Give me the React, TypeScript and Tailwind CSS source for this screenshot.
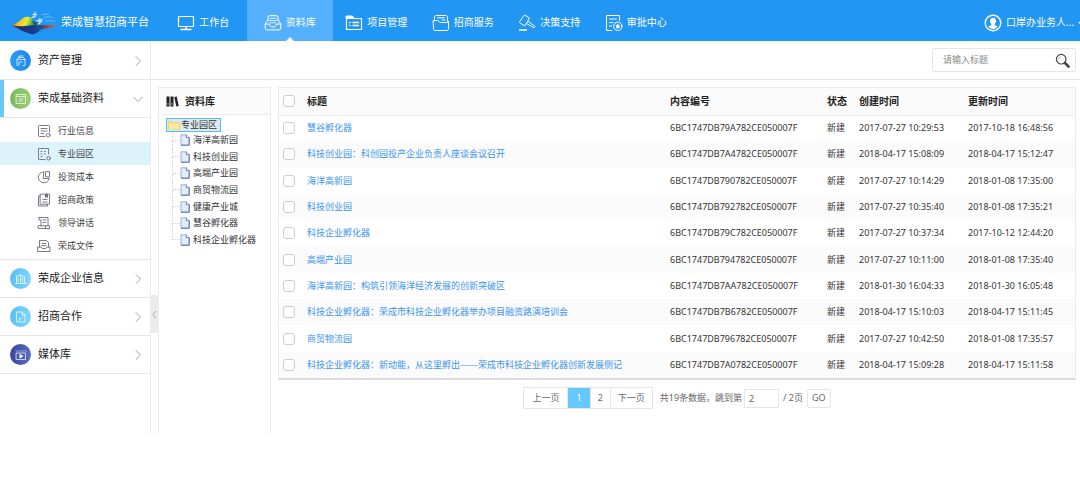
import { useState } from "react";
import type { ReactNode } from "react";

const svgBase = {
  fill: "none",
  stroke: "currentColor",
  strokeLinecap: "round" as const,
  strokeLinejoin: "round" as const,
  "aria-hidden": true,
};

function NavIcon({ children }: { children: ReactNode }) {
  return (
    <svg {...svgBase} viewBox="0 0 18 18" strokeWidth="1" className="h-[18px] w-[18px] shrink-0">
      {children}
    </svg>
  );
}

const navItems: { label: string; icon: ReactNode }[] = [
  {
    label: "工作台",
    icon: (
      <NavIcon>
        <path d="M1.500 2.500h15v10h-15z" strokeWidth="1.200" />
        <path d="M9 12.500v3M4 15.500h10" strokeWidth="1.400" />
      </NavIcon>
    ),
  },
  {
    label: "资料库",
    icon: (
      <NavIcon>
        <path d="M4 6.500V3c0-.8.500-1.300 1.300-1.300h7.400c.8 0 1.300.5 1.300 1.300v3.500" />
        <path d="M6 4.300h6M5.500 6.500h7M6 8.700h6" strokeWidth=".8" />
        <path d="M4 5.500 1.200 10v4.400c0 .9.600 1.500 1.500 1.500h12.600c.9 0 1.500-.6 1.500-1.500V10L14 5.500" />
        <path d="M1.200 10h4.300c0 1.700 1.400 3 3.500 3s3.500-1.300 3.500-3h4.300" />
      </NavIcon>
    ),
  },
  {
    label: "项目管理",
    icon: (
      <NavIcon>
        <path d="M1.500 15.500v-13h6l1.300 2h7.700v11z" strokeWidth="1.200" />
        <path d="M1.500 2h6l1.300 2.500H1.500z" fill="currentColor" />
        <path d="M4.800 8.500h.4M4.800 11.500h.4M8 8.500h5.500M8 11.500h5.500" strokeWidth="1.400" />
      </NavIcon>
    ),
  },
  {
    label: "招商服务",
    icon: (
      <NavIcon>
        <path d="M2.500 7V3.200c0-1 .7-1.700 1.700-1.700h9.600c1 0 1.700.7 1.700 1.700V7" />
        <path d="M5.500 3.800h7M10 6h3" />
        <path d="M1.500 6.500h4.200c1.300 0 1.200 2 2.500 2h5.800c1.500 0 2.500-.5 2.500-1.500v7.800c0 1-.7 1.700-1.700 1.700H3.200c-1 0-1.700-.7-1.700-1.700z" />
      </NavIcon>
    ),
  },
  {
    label: "决策支持",
    icon: (
      <NavIcon>
        <path d="M7.500 1.500 11.500 4 7 11.800l-4.700-2.500c-.8-.5-.9-1.100-.4-1.900l3.500-5.200c.5-.8 1.300-1.100 2.100-.7z" />
        <path d="m10 7.300 6.500 4.600c.8.600.3 2-.8 1.600L8.800 9.700" />
        <path d="M1.500 16h7" strokeWidth="1.400" />
      </NavIcon>
    ),
  },
  {
    label: "审批中心",
    icon: (
      <NavIcon>
        <path d="M7 16.500H1.500v-15h13v5" />
        <path d="M4.500 5h7M4.500 8.500h3.500M4.500 12h2" />
        <circle cx="12.800" cy="12.300" r="4.200" />
        <path d="m12.800 10.300.6 1.300 1.400.2-1 1 .2 1.400-1.200-.7-1.200.7.2-1.400-1-1 1.400-.2z" strokeWidth=".8" fill="currentColor" />
      </NavIcon>
    ),
  },
];

function Logo() {
  return (
    <svg viewBox="0 0 48 26" className="h-[26px] w-[48px] shrink-0" aria-hidden="true">
      <defs>
        <linearGradient id="logo-sun" x1="0" y1=".4" x2="1" y2=".6">
          <stop offset="0" stopColor="#d8401f" />
          <stop offset=".25" stopColor="#efb81c" />
          <stop offset=".55" stopColor="#e9ec38" />
          <stop offset=".8" stopColor="#4fae4c" />
          <stop offset="1" stopColor="#1c6c6c" />
        </linearGradient>
        <linearGradient id="logo-sea" x1="0" y1="0" x2="1" y2="0">
          <stop offset="0" stopColor="#8a3248" />
          <stop offset=".3" stopColor="#1d3273" />
          <stop offset=".75" stopColor="#153f93" />
          <stop offset="1" stopColor="#1d62bf" />
        </linearGradient>
        <linearGradient id="logo-hill" x1="0" y1="0" x2="1" y2="0">
          <stop offset="0" stopColor="#176a70" />
          <stop offset=".4" stopColor="#2c4a6e" />
          <stop offset=".65" stopColor="#c23d2e" />
          <stop offset="1" stopColor="#ee6a36" />
        </linearGradient>
      </defs>
      <path d="M0 15.500Q6 13 11 8q4-2.500 8-.3 3 4 6.500 8.300-12 2.500-25.500-.5z" fill="url(#logo-sun)" />
      <path d="M0 15.500q12 1.500 22-.5 5-1.500 9 2.500-3 4.500-10 7Q12 22.500 0 15.500z" fill="url(#logo-sea)" />
      <path d="M19 10.500q6 1 9.500 4.500 8 .5 16.500 0-6 3-15 4.300-6-1.800-11-8.800z" fill="url(#logo-hill)" />
      <path d="M20.500 4.500h4.500M23 1.800v5.500M19.500 7.500l4-1M27.500 8.500v6M24.500 11l6-1.500M25.500 14.500l4.500-3.500" stroke="#c4e4fd" strokeWidth="1.300" fill="none" />
      <path d="M29.500 4.800q4-1.600 7.500 0M31 7.500q5-1.400 10 0M33 11q5-1 10 .6" stroke="#7cc3fb" strokeWidth=".8" fill="none" />
    </svg>
  );
}

function Header() {
  return (
    <header className="flex h-[41px] items-stretch overflow-hidden bg-[#2196f3] text-white">
      <a href="#home" className="flex w-[160px] shrink-0 items-center gap-px pt-1 pl-3 text-[11px] whitespace-nowrap">
        <Logo />
        <span>荣成智慧招商平台</span>
      </a>
      <nav className="flex w-[519px] shrink-0">
        {navItems.map((item) => {
          const active = item.label === "资料库";
          return (
            <a
              key={item.label}
              href={`#${item.label}`}
              aria-current={active ? "page" : undefined}
              className={`relative flex flex-1 items-center justify-center gap-1 pt-1 text-[10px] whitespace-nowrap ${active ? "bg-[#54b0fd]" : ""}`}
            >
              {item.icon}
              <span>{item.label}</span>
              {active && (
                <span className="absolute bottom-0 left-1/2 h-0 w-0 -translate-x-1/2 border-x-4 border-b-4 border-x-transparent border-b-white" />
              )}
            </a>
          );
        })}
      </nav>
      <button type="button" className="ml-auto flex shrink-0 items-center gap-1 pt-1 text-[10px] whitespace-nowrap">
        <svg viewBox="0 0 18 18" className="h-[18px] w-[18px]" aria-hidden="true">
          <circle cx="9" cy="9" r="7.800" fill="none" stroke="#fff" strokeWidth="1.400" />
          <path d="M9 3.800c2 0 3 1.400 3 3.200 0 1.300-.5 2.300-1.300 2.900v1l2.900 1.300c-1 1.800-2.700 2.700-4.600 2.700s-3.600-.9-4.600-2.700l2.900-1.300v-1C6.500 9.300 6 8.300 6 7c0-1.800 1-3.200 3-3.200z" fill="#fff" />
        </svg>
        <span>口岸办业务人...</span>
        <span className="h-0 w-[2px] border-t-2 border-l-2 border-l-transparent border-t-white" />
      </button>
    </header>
  );
}

type Badge = { fill: string; glyph: ReactNode };

function Round({ badge }: { badge: Badge }) {
  return (
    <span className={`flex h-[21px] w-[21px] shrink-0 items-center justify-center rounded-full text-white/90 ${badge.fill}`}>
      <svg {...svgBase} viewBox="0 0 12 12" strokeWidth=".8" className="h-3 w-3">
        {badge.glyph}
      </svg>
    </span>
  );
}

function Chevron({ open = false }: { open?: boolean }) {
  return (
    <svg {...svgBase} viewBox="0 0 10 10" className="ml-auto h-[10px] w-[10px] text-[#a3a3a3]">
      <path d={open ? "M.5 3 5 7.500 9.500 3" : "M3 .5 7.500 5 3 9.500"} />
    </svg>
  );
}

const groups: { label: string; badge: Badge }[] = [
  {
    label: "资产管理",
    badge: {
      fill: "bg-linear-to-r from-[#2a9df6] to-[#1f86ea]",
      glyph: <path d="M2 10.500V4.500h8v6h-2M2 4.500l1.500-2h5l1.500 2M4 10.500v-3.500h3M4 2.500V1h4" />,
    },
  },
  {
    label: "荣成基础资料",
    badge: {
      fill: "bg-linear-to-r from-[#77b95f] to-[#9bcf72]",
      glyph: <path d="M1.500 1.500h9v9h-9zM1.500 3.500h9M4 6h4M4 8h3" />,
    },
  },
  {
    label: "荣成企业信息",
    badge: {
      fill: "bg-linear-to-r from-[#57bdf5] to-[#7ed6fb]",
      glyph: <path d="M.5 10.500h11M1.500 10.500V3l4-1.500v9M5.500 2.500l4 1v7M3 4.500v4M7.500 5v4" />,
    },
  },
  {
    label: "招商合作",
    badge: {
      fill: "bg-linear-to-r from-[#57bdf5] to-[#7ed6fb]",
      glyph: <path d="M2 1h5l3 3v7H2zM7 1v3h3M4.500 9V6.500M4.500 9l3-2.500" />,
    },
  },
  {
    label: "媒体库",
    badge: {
      fill: "bg-linear-to-r from-[#35479f] to-[#5c6cc4]",
      glyph: (
        <>
          <path d="M1.500 4h9v6.500h-9zM1 1.500l1 1M4 1.500l1 1M7 1.500l1 1M10 1.500l1 1" />
          <path d="m5 5.500 3 1.700-3 1.700z" fill="currentColor" />
        </>
      ),
    },
  },
];

const subItems: { label: string; glyph: ReactNode }[] = [
  {
    label: "行业信息",
    glyph: (
      <>
        <path d="M8 12.500H2.500a1 1 0 0 1-1-1v-9a1 1 0 0 1 1-1h9a1 1 0 0 1 1 1V8M4 4.500h6M4 7h6M4 9.500h3" />
        <circle cx="11.200" cy="11.200" r="1.800" />
      </>
    ),
  },
  {
    label: "专业园区",
    glyph: (
      <>
        <path d="M8 12.500H1.500v-11h10v6" strokeDasharray="2 .8" />
        <path d="M4 4.500h1M7.500 4.500h1M4 7h1M7.500 7h1M4 9.500h1" />
        <circle cx="11.500" cy="11.200" r="1.800" />
      </>
    ),
  },
  {
    label: "投资成本",
    glyph: (
      <>
        <path d="M6.500 1.800a5.500 5.500 0 1 0 5.700 6.700H6.500z" />
        <path d="M8.500 6.500v-5h4v5z" />
      </>
    ),
  },
  {
    label: "招商政策",
    glyph: (
      <>
        <path d="M3.500 1.200h9v10h-9zM3.500 3H1.500v10h9v-1.800M6 9h4M6 6.500h4" />
        <path d="M8.500 1.500v3l1-1 1 1v-3z" fill="currentColor" />
      </>
    ),
  },
  {
    label: "领导讲话",
    glyph: (
      <path d="M2 1.500h9v8M2 1.500v2.500h2v5.800M1.500 9.800h7v2.700h-7zM8.500 12.500h4V9.800h-4M6 4h3M6 6.500h3" />
    ),
  },
  {
    label: "荣成文件",
    glyph: (
      <path d="M2.500 8V1.500h7l2 2V8M5 4.500h4M5 6.500h4M1 8h3l1.200 1.500h3.600L10 8h3v4.500H1z" />
    ),
  },
];

function Sidebar() {
  return (
    <aside className="w-[151px] shrink-0 border-r border-[#ececec] pt-px">
      {groups.map((g) => {
        const open = g.label === "荣成基础资料";
        return (
          <section key={g.label} className="border-b border-[#e6e6e6]">
            <button
              type="button"
              aria-expanded={open}
              className={`flex h-[37px] w-full items-center border-l-4 pr-[7px] pl-[6px] text-[11px] text-[#222] ${open ? "border-[#66c8fd]" : "border-transparent"}`}
            >
              <Round badge={g.badge} />
              <span className="ml-[7px]">{g.label}</span>
              <Chevron open={open} />
            </button>
            {open && (
              <ul className="border-t border-[#e6e6e6] pt-px pb-[2px]">
                {subItems.map((s) => (
                  <li key={s.label}>
                    <a
                      href={`#${s.label}`}
                      className={`flex h-[23px] items-center gap-[7px] pl-[37px] text-[9px] text-[#444] ${s.label === "专业园区" ? "bg-[#dcf3fc]" : ""}`}
                    >
                      <svg {...svgBase} viewBox="0 0 14 14" strokeWidth=".9" className="h-[14px] w-[14px] text-[#6b6b78]">
                        {s.glyph}
                      </svg>
                      {s.label}
                    </a>
                  </li>
                ))}
              </ul>
            )}
          </section>
        );
      })}
    </aside>
  );
}

const treeNodes = ["海洋高新园", "科技创业园", "高端产业园", "商贸物流园", "健康产业城", "慧谷孵化器", "科技企业孵化器"];

function TreePanel() {
  return (
    <section className="w-[113px] shrink-0 border border-b-0 border-[#ececec]">
      <h2 className="flex h-[27px] items-center gap-[6px] border-b border-[#ececec] bg-[#fbfbfb] pl-[7px] text-[10px] font-bold text-[#222]">
        <svg viewBox="0 0 13 11" className="h-[11px] w-[13px]" aria-hidden="true">
          <path d="M.5.500h3v10h-3zM4.500.500h3v10h-3z" fill="#222" />
          <path d="m8.300 1 2.400-.6 2 9.500-2.400.6z" fill="#222" />
          <path d="M1.300 8h1.400M5.300 8h1.400" stroke="#fff" strokeWidth=".8" />
        </svg>
        资料库
      </h2>
      <div className="pt-[3px] pl-[7px] text-[9px] leading-3 whitespace-nowrap text-[#333]">
        <a href="#专业园区" className="flex h-[14px] w-[55px] items-center border border-[#58bfe3] bg-[#dde9ee] pl-px">
          <svg viewBox="0 0 12 10" className="mr-px h-[10px] w-3" aria-hidden="true">
            <path d="M.5 9.300V1.300h3.700l1 1.300h6.300v6.700z" fill="#f9e27e" stroke="#e3c862" strokeWidth=".6" />
            <path d="M1 3.800h10v5H1z" fill="#fdeb9c" />
          </svg>
          专业园区
        </a>
        <ul className="ml-[6px] grid min-h-[116px]">
          {treeNodes.map((n, i) => (
            <li key={n} className="flex items-stretch">
              <span className="flex w-2 flex-col">
                <span className="flex-1 border-b border-l border-dotted border-[#d4d4d4]" />
                <span className={`flex-1 border-l border-dotted ${i === treeNodes.length - 1 ? "border-transparent" : "border-[#d4d4d4]"}`} />
              </span>
              <a href={`#${n}`} className="flex items-center gap-[3px]">
                <svg viewBox="0 0 10 12" className="h-3 w-[10px]" aria-hidden="true">
                  <path d="M1 .8h5.300L9.200 3.600v7.600H1z" fill="#e3ecfb" stroke="#86a0d0" strokeWidth=".8" />
                  <path d="M9.200 3.600v7.600H1" fill="none" stroke="#4f6aa8" strokeWidth=".9" />
                  <path d="M6.300.8v2.800h2.900" fill="#fff" stroke="#4f6aa8" strokeWidth=".8" />
                </svg>
                {n}
              </a>
            </li>
          ))}
        </ul>
      </div>
    </section>
  );
}

const rows = [
  ["慧谷孵化器", "6BC1747DB79A782CE050007F", "2017-07-27 10:29:53", "2017-10-18 16:48:56"],
  ["科技创业园：科创园投产企业负责人座谈会议召开", "6BC1747DB7A4782CE050007F", "2018-04-17 15:08:09", "2018-04-17 15:12:47"],
  ["海洋高新园", "6BC1747DB790782CE050007F", "2017-07-27 10:14:29", "2018-01-08 17:35:00"],
  ["科技创业园", "6BC1747DB792782CE050007F", "2017-07-27 10:35:40", "2018-01-08 17:35:21"],
  ["科技企业孵化器", "6BC1747DB79C782CE050007F", "2017-07-27 10:37:34", "2017-10-12 12:44:20"],
  ["高端产业园", "6BC1747DB794782CE050007F", "2017-07-27 10:11:00", "2018-01-08 17:35:40"],
  ["海洋高新园：构筑引领海洋经济发展的创新突破区", "6BC1747DB7AA782CE050007F", "2018-01-30 16:04:33", "2018-01-30 16:05:48"],
  ["科技企业孵化器：荣成市科技企业孵化器举办项目融资路演培训会", "6BC1747DB7B6782CE050007F", "2018-04-17 15:10:03", "2018-04-17 15:11:45"],
  ["商贸物流园", "6BC1747DB796782CE050007F", "2017-07-27 10:42:50", "2018-01-08 17:35:57"],
  ["科技企业孵化器：新动能，从这里孵出——荣成市科技企业孵化器创新发展侧记", "6BC1747DB7A0782CE050007F", "2018-04-17 15:09:28", "2018-04-17 15:11:58"],
];

function Check({ label }: { label: string }) {
  return (
    <input
      type="checkbox"
      aria-label={label}
      className="ml-1 block h-3 w-3 appearance-none rounded-[3px] border border-[#cdcdcd] bg-white checked:bg-[#66c8fd]"
    />
  );
}

function DataTable() {
  return (
    <div className="border border-b-2 border-[#ececec] border-b-[#dcdcdc]">
      <table className="h-[290px] w-full table-fixed border-collapse text-left text-[9px] leading-3 whitespace-nowrap text-[#333]">
        <colgroup>
          <col className="w-[28px]" />
          <col />
          <col className="w-[157px]" />
          <col className="w-[32px]" />
          <col className="w-[109px]" />
          <col className="w-[107px]" />
        </colgroup>
        <thead>
          <tr className="h-[27px] border-b border-[#ececec] bg-[#fbfbfb] text-[10px] text-[#222]">
            <th className="p-0"><Check label="全选" /></th>
            <th className="p-0 font-bold">标题</th>
            <th className="p-0 font-bold">内容编号</th>
            <th className="p-0 font-bold">状态</th>
            <th className="p-0 font-bold">创建时间</th>
            <th className="p-0 font-bold">更新时间</th>
          </tr>
        </thead>
        <tbody>
          {rows.map(([title, id, created, updated]) => (
            <tr key={id} className="h-[26px] even:bg-[#fbfbfb]">
              <td className="p-0"><Check label={title} /></td>
              <td className="p-0"><a href={`#${id}`} className="text-[#3a94f0]">{title}</a></td>
              <td className="p-0">{id}</td>
              <td className="p-0">新建</td>
              <td className="p-0">{created}</td>
              <td className="p-0">{updated}</td>
            </tr>
          ))}
        </tbody>
      </table>
    </div>
  );
}

function Pagination() {
  const [target, setTarget] = useState("2");
  return (
    <div className="mt-[7px] flex items-center justify-center text-[9px] whitespace-nowrap text-[#666]">
      <nav className="flex h-[22px] divide-x divide-[#e6e6e6] border border-[#e6e6e6]">
        <button type="button" className="px-2">上一页</button>
        <button type="button" aria-current="page" className="bg-[#66c8fd] px-2 text-white">1</button>
        <button type="button" className="px-[7px]">2</button>
        <button type="button" className="px-[7px]">下一页</button>
      </nav>
      <label htmlFor="page-target" className="ml-[7px]">共19条数据，跳到第</label>
      <input
        id="page-target"
        value={target}
        onChange={(e) => setTarget(e.target.value)}
        className="ml-[2px] h-[19px] w-[35px] border border-[#e6e6e6] px-1 text-[#666] outline-none"
      />
      <span className="ml-1">/ 2页</span>
      <button type="button" className="ml-1 h-[19px] rounded-[2px] border border-[#e6e6e6] px-1">GO</button>
    </div>
  );
}

export default function App() {
  return (
    <div className="min-h-screen bg-white font-['Noto_Sans','Noto_Sans_CJK_SC',sans-serif]">
      <Header />
      <div className="flex min-h-[393px]">
        <Sidebar />
        <main className="relative flex min-w-0 flex-1 flex-col">
          <div className="flex h-[39px] items-center justify-end border-b border-[#e6e6e6] pr-1">
            <form role="search" onSubmit={(e) => e.preventDefault()} className="flex h-6 w-[144px] items-center rounded-[2px] border border-[#e6e6e6] pr-[5px] pl-[10px]">
              <input
                type="search"
                aria-label="请输入标题"
                placeholder="请输入标题"
                className="min-w-0 flex-1 text-[9px] outline-none placeholder:text-[#888]"
              />
              <button type="submit" aria-label="搜索">
                <svg viewBox="0 0 15 15" className="h-[15px] w-[15px]" fill="none" stroke="#444" aria-hidden="true">
                  <circle cx="6.200" cy="6.200" r="4.800" strokeWidth="1.200" />
                  <path d="M3.700 6.200a2.500 2.500 0 0 1 2-2.400" strokeWidth=".7" stroke="#888" />
                  <path d="m10 10 3.500 3.500" strokeWidth="2.600" strokeLinecap="round" />
                </svg>
              </button>
            </form>
          </div>
          <div className="flex flex-1 gap-[7px] pt-[7px] pr-1 pl-[7px]">
            <TreePanel />
            <div className="min-w-0 flex-1">
              <DataTable />
              <Pagination />
            </div>
          </div>
          <button
            type="button"
            aria-label="收起侧栏"
            className="absolute top-[254px] left-0 flex h-[38px] w-[7px] items-center justify-center rounded-r-[2px] bg-[#ebebeb]"
          >
            <svg {...svgBase} viewBox="0 0 6 10" className="h-[9px] w-[5px] text-[#999]">
              <path d="M4.500 1 1 5l3.500 4" />
            </svg>
          </button>
        </main>
      </div>
    </div>
  );
}
